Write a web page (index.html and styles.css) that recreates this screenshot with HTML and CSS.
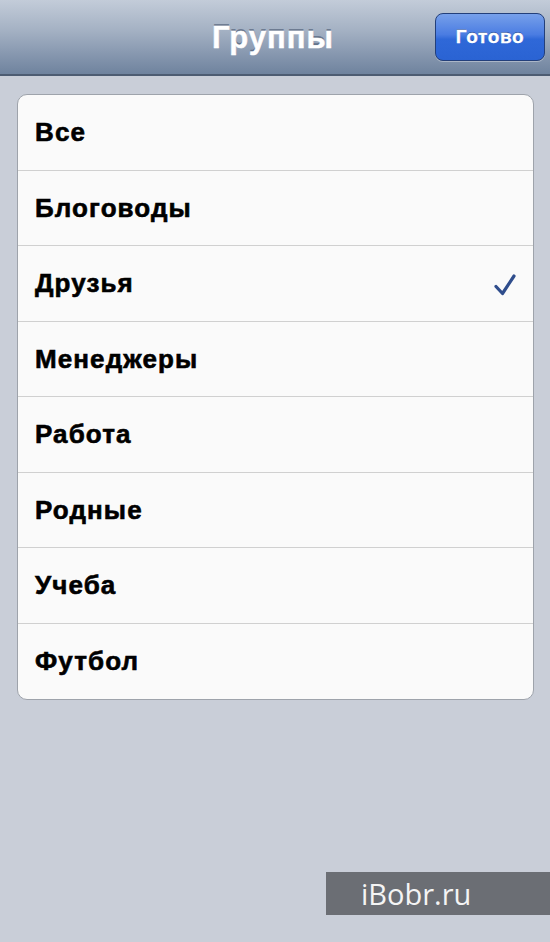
FILE: index.html
```html
<!DOCTYPE html>
<html lang="ru">
<head>
    <meta charset="UTF-8">
    <meta name="viewport" content="width=device-width, initial-scale=1.0">
    <title>Группы</title>
    <link rel="stylesheet" href="styles.css">
</head>
<body>
    <div class="screen">
        <div class="nav-bar">
            <h1 class="nav-title">Группы</h1>
            <a href="#" class="done-button">Готово</a>
        </div>

        <div class="content">
            <ul class="group-list">
                <li>Все</li>
                <li>Блоговоды</li>
                <li class="checked">Друзья
                    <svg class="check" width="22" height="22" viewBox="0 0 22 22">
                        <path d="M2 12.5 L8.5 19.5 L20 2" fill="none" stroke="#2f4d8c" stroke-width="3.2" stroke-linecap="round" stroke-linejoin="round"/>
                    </svg>
                </li>
                <li>Менеджеры</li>
                <li>Работа</li>
                <li>Родные</li>
                <li>Учеба</li>
                <li>Футбол</li>
            </ul>
        </div>

        <div class="watermark">iBobr.ru</div>
    </div>
</body>
</html>
```

FILE: styles.css
```css
body {
    margin: 0;
    font-family: 'Liberation Sans', Arial, sans-serif;
    background: #c8cdd7;
}

.screen {
    width: 550px;
    height: 942px;
    position: relative;
    overflow: hidden;
    background: #c9ced8;
}

/* Top navigation bar */
.nav-bar {
    height: 76px;
    display: flex;
    align-items: center;
    justify-content: center;
    position: relative;
    background: linear-gradient(to bottom, #c3ccd9 0%, #a5b2c4 40%, #8596ae 75%, #6f839e 100%);
    border-bottom: 2px solid #4d5c72;
    box-sizing: border-box;
}

.nav-title {
    margin: 2px 0 0 -4px;
    font-size: 31px;
    letter-spacing: 1px;
    font-weight: bold;
    color: #fff;
    -webkit-text-stroke: 0.5px #fff;
    text-shadow: 0 -2px 0 rgba(60, 75, 100, 0.55);
}

.done-button {
    position: absolute;
    right: 5px;
    top: 13px;
    width: 110px;
    height: 48px;
    box-sizing: border-box;
    display: flex;
    align-items: center;
    justify-content: center;
    text-decoration: none;
    font-size: 19px;
    letter-spacing: 0.6px;
    font-weight: bold;
    color: #fff;
    -webkit-text-stroke: 0.3px #fff;
    text-shadow: 0 -1px 0 rgba(0, 30, 90, 0.5);
    border: 1px solid #233f7a;
    border-radius: 8px;
    background: linear-gradient(to bottom, #77a0ea 0%, #4a7ce2 45%, #2f68d8 55%, #2a63d3 100%);
    box-shadow: 0 1px 0 rgba(255, 255, 255, 0.35);
}

/* Grouped list */
.content {
    padding: 18px 16px 0 17px;
}

.group-list {
    list-style: none;
    margin: 0;
    padding: 0;
    background: #fafafa;
    border: 1px solid #9ea3ab;
    border-radius: 10px;
    overflow: hidden;
}

.group-list li {
    height: 75.5px;
    box-sizing: border-box;
    display: flex;
    align-items: center;
    justify-content: space-between;
    padding: 1px 17px 0 17px;
    font-size: 26px;
    letter-spacing: 1.1px;
    font-weight: bold;
    color: #000;
    -webkit-text-stroke: 0.6px #000;
    border-bottom: 1px solid #d0d0d0;
}

.group-list li:last-child {
    border-bottom: none;
}

.check {
    margin-top: 2px;
}

.watermark {
    position: absolute;
    left: 326px;
    top: 872px;
    width: 224px;
    height: 43px;
    background: #6b6e74;
    color: #f4f4f4;
    font-family: 'Open Sans', sans-serif;
    font-size: 29px;
    line-height: 43px;
    padding-left: 35px;
    box-sizing: border-box;
}
```
